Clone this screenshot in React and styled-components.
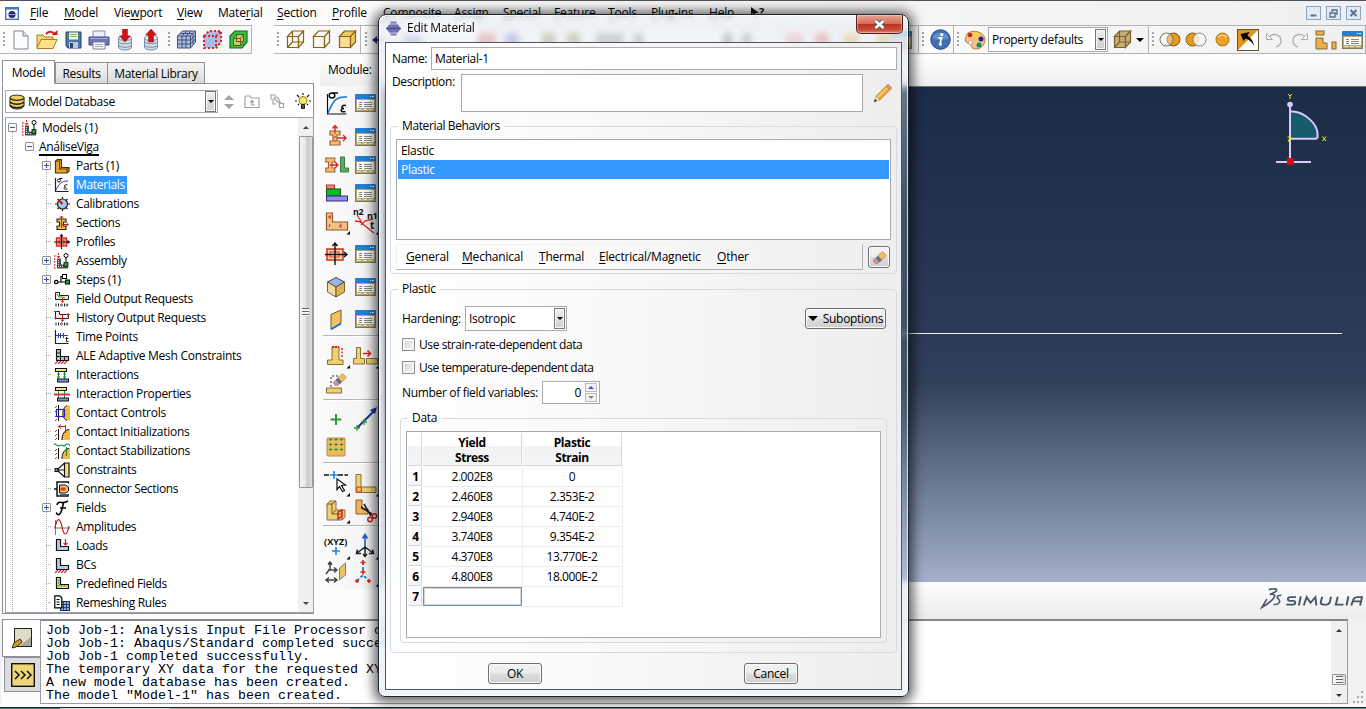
import React from 'react';
import styled, { createGlobalStyle, css } from 'styled-components';

const Global = createGlobalStyle`
  * { box-sizing: border-box; }
  html, body { margin: 0; padding: 0; overflow: hidden; }
  body { font: 12px/16px "Open Sans", "Noto Sans", sans-serif; letter-spacing: -0.3px; color: #000; }
  svg { display: block; flex: none; }
  fieldset, legend { margin: 0; padding: 0; min-width: 0; }
  u { text-underline-offset: 2px; text-decoration-thickness: 1px; }
`;

/* ---------- shell ---------- */
const Desktop = styled.div`
  position: relative; width: 1366px; height: 709px; overflow: hidden;
  display: flex; flex-direction: column; background: #fcfcfc;
  border-top: 1px solid #50505c;
`;
const MenuBar = styled.div`
  height: 24px; flex: none; display: flex; align-items: center; padding-left: 5px;
  background: linear-gradient(90deg, #fff 0%, #fafafa 40%, #f0f0f0 100%);
`;
const MenuLogo = styled.div`width: 25px;`;
const MenuItem = styled.span`width: ${p => p.$w}px; flex: none; white-space: nowrap; letter-spacing: -0.2px;`;
const WindowButtons = styled.div`margin-left: auto; display: flex; gap: 5px; padding-right: 5px;`;
const WindowButton = styled.div`
  width: 15px; height: 14px; border: 1px solid #8fa3bd; background: #dfebf7; display: grid; place-items: center;
`;
const ToolBars = styled.div`
  height: 29px; flex: none; display: flex;
`;
const ToolSection = styled.div`
  width: ${p => p.$w}px; flex: none; display: flex; align-items: center; overflow: hidden;
  margin-left: ${p => p.$ml || 0}px; border: 1px solid #b4b4b4; border-left: 0;
  background: linear-gradient(90deg, ${p => p.$from || '#fdfdfd'}, ${p => p.$to || '#f7f7f7'});
`;
const Grip = styled.div`
  width: 8px; height: 15px; flex: none; margin-left: ${p => p.$ml || 0}px;
  background: linear-gradient(#a6a6a6, #a6a6a6) 3px 0 / 2px 2px, repeating-linear-gradient(#a6a6a6 0 2px, transparent 2px 4px) 3px 0 / 2px 15px no-repeat;
  background-repeat: no-repeat;
`;
const Tool = styled.div`
  width: ${p => p.$w || 26}px; height: 26px; flex: none; display: grid; place-items: center;
`;
const Smudge = styled.div`
  width: ${p => p.$w}px; height: 14px; flex: none; margin-left: ${p => p.$ml}px; background: ${p => p.$c};
`;
const Main = styled.div`height: 565px; flex: none; display: flex;`;

/* ---------- combo boxes ---------- */
const Combo = styled.div`
  width: ${p => p.$w}px; height: ${p => p.$h || 25}px; flex: none; display: flex; align-items: center;
  padding: 1px 1px 1px 3px; background: #fff; border: 1px solid #a9a9ae; gap: 3px; white-space: nowrap;
`;
const ComboText = styled.span`flex: 1; letter-spacing: ${p => p.$ls || -0.3}px;`;
const ComboButton = styled.div`
  width: 11px; height: 21px; border: 1px solid #777; background: linear-gradient(#f2f2f2, #dcdcdc 50%, #cfcfcf);
  display: grid; place-items: center; box-shadow: inset 0 0 0 1px #f8f8f8;
`;
const Down = styled.i`
  width: 0; height: 0; border: ${p => p.$s || 4}px solid transparent; border-top-color: ${p => p.$c || '#000'}; border-bottom: 0;
`;
const Up = styled.i`
  width: 0; height: 0; border: ${p => p.$s || 4}px solid transparent; border-bottom-color: ${p => p.$c || '#000'}; border-top: 0;
`;

/* ---------- left tree panel ---------- */
const Side = styled.div`width: 320px; flex: none; padding: 6px 0 0 2px;`;
const Tabs = styled.div`display: flex; align-items: flex-end; height: 24px; position: relative; z-index: 1; margin-bottom: -1px;`;
const Tab = styled.div`
  width: ${p => p.$w}px; height: ${p => (p.$on ? 24 : 22)}px; display: grid; place-items: center;
  border: 1px solid #8e8f9a; border-bottom-color: ${p => (p.$on ? '#fff' : '#8e8f9a')};
  background: ${p => (p.$on ? '#fff' : 'linear-gradient(#f4f4f4, #e9e9e9 50%, #d8d8d8)')};
  margin-right: ${p => (p.$on ? 0 : -1)}px; white-space: nowrap; padding-top: 1px;
`;
const SidePanel = styled.div`
  width: 312px; height: 531px; border: 1px solid #8e8f9a; background: #fff;
  padding: 6px 0 0 2px; display: flex; flex-direction: column; gap: 4px;
`;
const DbRow = styled.div`display: flex; align-items: center; height: 23px;`;
const DbTools = styled.div`display: flex; align-items: center; padding-left: 6px; gap: 10px;`;
const Sorter = styled.div`display: flex; flex-direction: column; gap: 4px;`;
const TreeBox = styled.div`
  width: 309px; height: 496px; border: 1px solid #a0a0a8; display: flex; overflow: hidden;
`;
const TreeRows = styled.div`
  flex: 1; height: 494px; overflow: hidden;
  background: repeating-linear-gradient(#aaa 0 1px, transparent 1px 2px) 6px 14px / 1px 500px no-repeat;
`;
const TreeRow = styled.div`
  height: 19px; display: flex; align-items: center; white-space: nowrap; padding-left: ${p => p.$pad}px;
`;
const TreeKids = styled.div`
  background: repeating-linear-gradient(#aaa 0 1px, transparent 1px 2px) 40px 0 / 1px 500px no-repeat;
`;
const Stub = styled.div`
  width: 12px; height: 9px; flex: none;
  background: repeating-linear-gradient(90deg, #aaa 0 1px, transparent 1px 2px) 4px 4px / 6px 1px no-repeat;
`;
const StubGap = styled.div`width: 3px; flex: none;`;
const Expander = styled.div`
  width: 9px; height: 9px; border: 1px solid #919191; background: #fafafa; display: grid; place-items: center; border-radius: 1px;
`;
const TreeIcon = styled.div`width: 16px; height: 16px; flex: none;`;
const TreeText = styled.span`
  margin-left: ${p => (p.$ml == null ? 4 : p.$ml)}px; padding: 0 2px; line-height: 18px; letter-spacing: ${p => p.$ls || -0.33}px;
  ${p => p.$sel && css`background: #3399ff; color: #fff;`}
  ${p => p.$under && css`line-height: 14px; border-bottom: 2px solid #000; padding: 0; margin-top: 2px;`}
`;
const ScrollBar = styled.div`
  width: ${p => p.$w || 15}px; flex: none; background: #f0f0f0; display: flex; flex-direction: column; align-items: center;
`;
const ScrollEnd = styled.div`height: ${p => p.$h}px; display: grid; place-items: center; flex: none;`;
const Thumb = styled.div`
  width: 14px; height: ${p => p.$h}px; flex: none; margin-bottom: auto; border: 1px solid #979797; border-radius: 1px;
  margin-top: ${p => p.$mt || 0}px;
  background: linear-gradient(90deg, #f5f5f5, #e6e6e8 45%, #c9cacc 60%, #dcdcde); display: grid; place-items: center;
`;
const ThumbLines = styled.div`width: 7px; height: 8px; background: repeating-linear-gradient(#666 0 1px, #f4f4f4 1px 3px);`;

/* ---------- viewport side ---------- */
const Work = styled.div`flex: 1; padding-top: 3px; display: flex; flex-direction: column;`;
const ModuleBar = styled.div`
  height: 29px; flex: none; padding: 5px 0 0 8px; background: linear-gradient(#ffffff, #eeeeee);
`;
const WorkRow = styled.div`display: flex; height: 533px; flex: none;`;
const ToolBox = styled.div`
  width: 66px; height: 503px; flex: none; background: linear-gradient(90deg, #fbfbfb, #f1f1f1); padding: 3px 0 0 3px;
`;
const ToolBoxRow = styled.div`height: 28px; margin-top: ${p => p.$mt || 0}px; display: flex;`;
const ToolBoxCell = styled.div`width: 28.5px; height: 28px; display: grid; place-items: center;`;
const ToolBoxRule = styled.div`height: 2px; background: #b5b5b5; border-bottom: 1px solid #fff; margin: ${p => p.$m};`;
const View = styled.div`flex: 1; display: flex; flex-direction: column;`;
const Canvas = styled.div`
  height: 496px; flex: none; position: relative; border-top: 1px solid #77776f;
  background: linear-gradient(#1b2c46 0%, #24344f 28%, #2d3d59 54%, #30415a 60%, #a2b0c9 100%);
`;
const Beam = styled.div`position: absolute; left: 0; right: 24px; top: 246px; height: 1px; background: #f2f4f8;`;
const Triad = styled.svg`position: absolute; left: 886px; top: 0;`;
const BrandBar = styled.div`
  height: 37px; flex: none; background: linear-gradient(#fdfdfd, #ececec); display: flex; justify-content: flex-end; padding: 5px 3px 0 0;
`;

/* ---------- message area ---------- */
const Messages = styled.div`height: 85px; flex: none; display: flex; background: #f2f2f2; padding-left: 2px;`;
const MsgTabs = styled.div`width: 38px; background: #fcfcfc;`;
const MsgTab = styled.div`
  height: ${p => p.$h}px; border: 1px solid #8e8f9a; border-right: 0; display: grid; place-items: center;
  background: ${p => (p.$on ? '#fff' : '#dcdcdc')}; margin-left: ${p => (p.$on ? 0 : 2)}px;
`;
const MsgBox = styled.div`
  width: 1308px; height: 85px; border: 1px solid #9a9aa2; border-top: 2px solid #85858d; background: #fff; display: flex;
`;
const MsgText = styled.pre`
  margin: 0; flex: 1; padding: 3px 0 0 5px; font: 13.33px/13px "Liberation Mono", monospace; letter-spacing: 0; color: #000;
`;
const Corner = styled.div`flex: 1; display: flex; justify-content: flex-end; align-items: flex-end;`;
const TaskStrip = styled.div`
  margin-top: auto; height: 2px; flex: none;
  background: linear-gradient(90deg, #56706e 0 60px, #d8d8d8 60px 170px, #b8a890 170px 350px, #6b8890 350px 1366px);
  border-top: 1px solid #15282e;
`;

/* ---------- dialog ---------- */
const Dialog = styled.div`
  position: absolute; left: 378px; top: 13px; width: 531px; height: 683px; border-radius: 8px 8px 7px 7px;
  border: 1px solid #20242c; padding: 0 6px 6px;
  background: linear-gradient(180deg, rgba(238,242,247,.66) 0, rgba(230,237,244,.66) 60px, rgba(190,206,224,.45) 80px, rgba(170,188,210,.22) 200px, rgba(160,180,205,.14) 400px, rgba(200,214,230,.3) 560px, rgba(232,240,248,.85) 600px, rgba(238,244,250,.92) 100%);
  backdrop-filter: blur(3px);
  box-shadow: inset 0 0 0 1px rgba(255,255,255,.75), 0 1px 12px 4px rgba(0,0,0,.62);
  display: flex; flex-direction: column;
`;
const TitleBar = styled.div`height: 27px; flex: none; display: flex; align-items: flex-start; padding: 5px 0 0 1px; gap: 6px;`;
const TitleText = styled.span`letter-spacing: -0.22px; text-shadow: 0 0 6px #fff, 0 0 8px #fff, 0 0 10px #fff;`;
const Close = styled.div`
  margin: -5px -1px 0 auto; width: 47px; height: 19px; border: 1px solid #5a1a16; border-top: 0; border-radius: 0 0 5px 5px;
  background: linear-gradient(#e6a596 0, #d4705c 47%, #b8321c 50%, #c9513a 85%, #e08a70 100%); display: grid; place-items: center;
  box-shadow: inset 0 0 0 1px rgba(255,255,255,.35);
`;
const Body = styled.div`
  width: 517px; height: 648px; border: 1px solid #50565e; padding: 4px 3px 0 4px;
  background: linear-gradient(90deg, #ffffff, #fafafa 35%, #eeeeee); display: flex; flex-direction: column;
`;
const Row = styled.div`
  display: flex; align-items: ${p => p.$a || 'center'}; height: ${p => p.$h}px; flex: none;
  margin-top: ${p => p.$mt || 0}px; padding-left: ${p => p.$pl || 0}px;
`;
const Label = styled.label`width: ${p => (p.$w ? `${p.$w}px` : 'auto')}; flex: none; white-space: nowrap; letter-spacing: ${p => p.$ls || -0.3}px;`;
const Field = styled.div`
  width: ${p => p.$w}px; height: ${p => p.$h}px; border: 1px solid #a9a9ae; background: #fff; padding: 3px; letter-spacing: -0.3px;
`;
const Pencil = styled.div`margin-left: 10px; align-self: center;`;
const Group = styled.fieldset`
  width: ${p => p.$w}px; height: ${p => p.$h}px; flex: none; margin-top: ${p => p.$mt}px; margin-left: ${p => p.$ml || 0}px;
  border: 1px solid #d3dbe3; border-radius: 4px; padding: ${p => p.$pad};
`;
const Legend = styled.legend`
  margin-left: calc(${p => p.$x}px - var(--inset, 0px)); padding: 0 4px; height: 16px; letter-spacing: ${p => p.$ls || -0.3}px;
`;
const List = styled.div`width: 495px; height: 101px; border: 1px solid #a9a9ae; background: #fff; padding: 1px;`;
const ListItem = styled.div`
  height: 19px; line-height: 19px; padding-left: 3px; ${p => p.$sel && css`background: #3399ff; color: #fff;`}
`;
const BehaviorMenu = styled.div`
  width: 467px; height: 26px; display: flex; align-items: center; padding-left: 9px;
  border: 1px solid #f1f1f5; border-right-color: #b0b0b0; border-bottom-color: #b0b0b0;
`;
const Button = styled.div`
  width: ${p => p.$w}px; height: ${p => p.$h || 21}px; flex: none; border: 1px solid #707070; border-radius: 3px;
  background: linear-gradient(#f3f3f3, #ebebeb 49%, #dddddd 51%, #cfcfcf); box-shadow: inset 0 0 0 1px #fbfbfb;
  display: flex; align-items: center; justify-content: center; gap: 5px; white-space: nowrap;
  margin-left: ${p => p.$ml || 0}px;
`;
const Check = styled.div`
  width: 13px; height: 13px; border: 1px solid #8e8f8f; flex: none; margin-right: 4px;
  background: linear-gradient(135deg, #cdd2d8, #f6f6f6); box-shadow: inset 0 0 0 2px #f4f4f4;
`;
const Spin = styled.div`
  width: 58px; height: 23px; border: 1px solid #a9a9ae; background: #fff; display: flex; align-items: center; justify-content: flex-end; padding-right: 2px; gap: 4px;
`;
const SpinButtons = styled.div`display: flex; flex-direction: column; gap: 1px;`;
const SpinButton = styled.div`width: 12px; height: 9px; border: 1px solid #bcbcbc; background: #f1f1f1; display: grid; place-items: center;`;
const TableFrame = styled.div`width: 475px; height: 207px; border: 1px solid #a9a9ae; background: #fff; padding: 1px;`;
const Table = styled.div`display: grid; grid-template-columns: 15px 100px 100px; grid-template-rows: 34px repeat(7, 20px); width: 215px;`;
const Head = styled.div`
  font-weight: 700; text-align: center; line-height: 15px; padding-top: 2px; white-space: pre; letter-spacing: -0.42px;
  background: linear-gradient(#fff 40%, #f1f2f4 42%, #f4f5f7); border-right: 1px solid #d6d8db; border-bottom: 1px solid #d6d8db; margin: 0 1px 1px 0;
`;
const RowHead = styled.div`
  font-weight: 700; text-align: center; line-height: 19px; background: linear-gradient(#fff 40%, #f3f4f6); border-right: 1px solid #d6d8db; border-bottom: 1px solid #d6d8db; margin: 0 1px 1px 0; padding-left: 2px;
`;
const Cell = styled.div`
  text-align: center; line-height: 19px; border-right: 1px solid #ececec; border-bottom: 1px solid #ececec; padding-right: 1px; letter-spacing: -0.45px;
  ${p => p.$active && css`border: 1px solid #8a8a8e; border-right-color: #5c94d6; border-bottom-color: #5c94d6; margin: 0 1px 1px 0; box-shadow: inset 0 0 0 1px #d6d6d6;`}
`;

/* ---------- icon drawings ---------- */
const S = ({ s = 16, w, h, vb, children }) => (
  <svg width={w || s} height={h || s} viewBox={vb || `0 0 ${w || s} ${h || s}`} fill="none">{children}</svg>
);
const Hatch = ({ y = 13, x = 1, n = 4 }) => (
  <path d={Array.from({ length: n }, (_, i) => `M${x + i * 3} ${y + 3}l3 -3`).join('')} stroke="#c22" strokeWidth="1.1" />
);
const Manager = () => (
  <S w={21} h={18}>
    <rect x=".5" y="1.500" width="20" height="16" fill="#b5a97c" stroke="#837a54" />
    <path d="M0 1a1 1 0 0 1 1-1h19a1 1 0 0 1 1 1v4h-21z" fill="#1f80d4" /><path d="M15 2.500h1M17 2.500h2" stroke="#fff" />
    <rect x="2" y="6" width="17" height="8" fill="#fcfcf8" />
    <path d="M4 8.500h3M4 10.500h3M4 12.500h3M9 8.500h8M9 10.500h8M9 12.500h8" stroke="#77776f" strokeWidth=".9" />
    <path d="M2 15.500h4M8 15.500h4M14 15.500h4" stroke="#eee6c2" />
  </S>
);
const IBeam = 'M2 2h10v4h-3v6h3v4h-10v-4h3v-6h-3z';
const WireCube = ({ fill = 'none', s = '#8a6210', inner, left = fill }) => (
  <S w={21} h={21}>
    <path d="M2.500 7.500h11v11h-11z" fill={left} stroke={s} strokeWidth="1.200" />
    <path d="M2.500 7.500l5-5.500h11l-5 5.500zM18.500 2v11l-5 5.500v-11z" fill={fill} stroke={s} strokeWidth="1.200" />
    {inner && <path d="M7.500 2v11h11M7.500 13l-5 5.500" stroke={s} strokeWidth="1.200" />}
  </S>
);
const GridCube = ({ red }) => (
  <S w={21} h={21}>
    <path d="M1.500 7l5-5h13v11l-5 6h-13z" fill="#a9bbea" />
    <path d={red ? 'M2 7l5-5h12v11l-5 6h-12zM2 7h12v12M14 7l5-5' : 'M1.500 7l5-5h13v11l-5 6h-13zM1.500 7h13v12M14.500 7l5-5M6 7v12M10 7v12M1.500 11h13l5-5M1.500 15h13l5-5M6 7l5-5M10 7l5-5M4 4.500h13v11'}
      stroke={red ? '#ea2020' : '#44506c'} strokeWidth={red ? 2 : 1} strokeDasharray={red ? '2 2' : undefined} />
  </S>
);
const DbArrow = ({ up }) => (
  <S w={16} h={22}>
    <path d="M1.500 9v9c0 4 13 4 13 0v-9z" fill="#cfdce9" stroke="#7d8fa3" />
    <ellipse cx="8" cy="9" rx="6.500" ry="2.500" fill="#eef4fa" stroke="#7d8fa3" />
    <path d="M1.500 12.500c0 3 13 3 13 0M1.500 16c0 3 13 3 13 0" stroke="#7d8fa3" />
    <path d={up ? 'M5.500 13v-7h-3l5.500-6 5.500 6h-3v7z' : 'M5.500 0h5v7h3l-5.500 6-5.500-6h3z'} fill="#cc1418" stroke="#9a0c10" strokeWidth=".5" />
  </S>
);
const EraserShape = () => (
  <>
    <path d="M1 11l3 3 3-1.500-4-4z" fill="#e58a92" stroke="#b0606a" strokeWidth=".6" />
    <path d="M3.500 8l4 4.500 2.500-2.500-4-4.500z" fill="#59708c" />
    <path d="M6 5.500l4 4.500 4.500-4.500-4-4z" fill="#eebd62" stroke="#b3832c" strokeWidth=".6" />
  </>
);

const T = {
  blank: <S w={16} h={20}><path d="M1 1h9l5 5v13h-14z" fill="#fbfcff" stroke="#7d8796" /><path d="M10 1v5h5" fill="#dde3ec" stroke="#7d8796" /></S>,
  open: <S w={22} h={20}><path d="M1 18V5h6l2 2h8v3" fill="#f6d778" stroke="#a97c1a" /><path d="M1 18.500l4-9h16l-4 9z" fill="#fbe08a" stroke="#a97c1a" /><path d="M10 4c3-3 7-3 9 1" stroke="#d22418" strokeWidth="2" /><path d="M15.500 5h6v-5z" fill="#d22418" /></S>,
  save: <S w={17} h={18}><path d="M1 1h15v16h-13l-2-2z" fill="#4b76ac" stroke="#26466f" /><rect x="4" y="1.500" width="9" height="7" fill="#eaf2fa" /><path d="M5 3.500h7M5 5.500h7" stroke="#8cb34e" /><rect x="4" y="11" width="9" height="6" fill="#b9c9dd" /><rect x="5" y="12" width="3" height="5" fill="#26466f" /></S>,
  print: <S w={22} h={20}><path d="M5 7v-6h12v6" fill="#eaf1fb" stroke="#8a94a8" /><path d="M1 7h20v8h-20z" fill="#6f74b6" stroke="#474c86" /><path d="M2 8.500h18" stroke="#a9ade0" /><path d="M5 12h12v7h-12z" fill="#fff" stroke="#7780a0" /><path d="M7 14.500h8M7 16.500h8" stroke="#9ab" /></S>,
  dbDown: <DbArrow />, dbUp: <DbArrow up />,
  grid1: <GridCube />, grid2: <GridCube red />,
  grid3: <S w={21} h={21}><path d="M2 7l5-5h12v11l-5 6h-12z" fill="#31c63a" stroke="#146a1a" strokeWidth="1.200" /><path d="M5.500 9.500l3-4h7v7l-3 4h-7z" fill="#d2c66a" stroke="#5a5218" /><path d="M5.500 9.500h7v7M12.500 9.500l3-4M8.500 5.500v7h7" stroke="#5a5218" strokeWidth=".9" /></S>,
  cube1: <WireCube inner />, cube2: <WireCube />, cube3: <WireCube fill="#efc765" left="#f7dd96" />, cube4: <WireCube fill="#c5ae7c" inner s="#7c6128" />,
  info: <S w={21} h={21}><circle cx="10.500" cy="10.500" r="9.800" fill="#3f6fb4" stroke="#2b5190" /><path d="M2 9a9 8 0 0 1 17 0q-8 4-17 0" fill="#7fa3d6" opacity=".6" /><circle cx="11.800" cy="5.500" r="1.500" fill="#fff" /><path d="M8.500 9h3l-1.600 6.500h2" stroke="#fff" strokeWidth="1.800" /></S>,
  palette: <S w={22} h={20}><path d="M3 4C7-1 20 1 21 9c0 6-4 10-9 10-4 0-5-2-5-4s-3-1-5-3 0-5 1-8z" fill="#f5c083" stroke="#9a6a30" strokeWidth=".8" /><circle cx="6" cy="5" r="2.300" fill="#d8201c" /><circle cx="12" cy="4.500" r="2.300" fill="#f5e21b" /><circle cx="17" cy="9" r="2.500" fill="#1c2a90" /><circle cx="15" cy="15" r="2.500" fill="#15905a" /><circle cx="6.500" cy="12.500" r="2" fill="#fff" stroke="#a77" strokeWidth=".6" /></S>,
  venn1: <S w={22} h={15}><circle cx="14.500" cy="7.500" r="6.500" fill="#e99a1b" stroke="#7a5a18" /><circle cx="7.500" cy="7.500" r="6.500" fill="#fff" fillOpacity=".35" stroke="#7a7058" /></S>,
  venn2: <S w={22} h={15}><circle cx="7.500" cy="7.500" r="6.500" fill="#e99a1b" stroke="#7a5a18" /><circle cx="14.500" cy="7.500" r="6.500" fill="#fbfbfb" fillOpacity=".8" stroke="#8a8a8a" /></S>,
  ball: <S w={15} h={15}><circle cx="7.500" cy="7.500" r="6.500" fill="#eda125" stroke="#a8741c" /><path d="M3 5a6 5 0 0 1 9 0" stroke="#fbd28a" strokeWidth="1.500" /></S>,
  replace: <S w={22} h={22}><rect x=".5" y=".5" width="21" height="21" fill="#fff" stroke="#5c5438" /><path d="M1 21v-20h20z" fill="#e0951c" /><path d="M3.500 5l9-2-2 3.500c4 3 6 6 6.500 10.500-2-4-4.500-6-8.500-7.500l-2 2.500z" fill="#000" /></S>,
  undo: <S w={18} h={18}><path d="M4 6c5-5 12-2 12 4 0 3-2 5-5 6" stroke="#a9a9a9" strokeWidth="1.200" /><path d="M1.500 2.500v6h6z" fill="#fff" stroke="#a9a9a9" /></S>,
  redo: <S w={18} h={18}><path d="M14 6c-5-5-12-2-12 4 0 3 2 5 5 6" stroke="#a9a9a9" strokeWidth="1.200" /><path d="M16.500 2.500v6h-6z" fill="#fff" stroke="#a9a9a9" /></S>,
  parts: <S w={22} h={20}><rect x="1" y="1" width="8" height="4" fill="#efb04a" stroke="#7c6a3a" /><path d="M1 8h7v5h4v6h-11z" fill="#efb04a" stroke="#7c6a3a" /><rect x="17" y="12" width="4" height="7" fill="#efb04a" stroke="#7c6a3a" /></S>,
  manager: <Manager />,
  arrow: <S w={14} h={14}><path d="M2 7h11" stroke="#22307a" strokeWidth="2" /><path d="M1 7l5-4v8z" fill="#22307a" /></S>,
};

const Assembly = () => (
  <>
    <path d="M3 5.500h4v6h7v4h-11z" fill="#4e4e4e" />
    <path d="M4 7.500h2M4 9.500h2M4 11.500h2M4 13.500h9" stroke="#ddd" strokeDasharray="1 1" /><path d="M.8 2v14M4.500 0v4" stroke="#d22" strokeDasharray="2 1" /><path d="M3 3l1.500 2L6 3" stroke="#d22" />
    <circle cx="12" cy="2.500" r="2" fill="#fff" stroke="#000" /><path d="M12 4.500v5" stroke="#000" /><rect x="10" y="9.500" width="4" height="4" fill="#2e9b36" stroke="#111" strokeWidth=".8" />
  </>
);
const LShape = ({ fill = '#b9cbea', y = 1 }) => <path d={`M2.500 ${y + 0.5}h4v7h8v4h-12z`} fill={fill} stroke="#111" strokeWidth="1.200" />;
const K = {
  part: <S><path d="M1.500 3l2-1.500h4v8h7.500v3.500l-2 2h-11.500z" fill="#e9a62c" stroke="#4e3508" strokeWidth="1.200" /><path d="M1.500 3h4v8h7.500v4M5.500 3l2-1.500M5.500 11l2-1.500M13 11l2-1.500" stroke="#4e3508" strokeWidth=".9" /></S>,
  mat: <S><path d="M1.500 1v13.500h13" stroke="#222" strokeWidth="1.200" /><path d="M2 13c3-6 5-9 12-9" stroke="#2a3fb8" /><circle cx="5" cy="3.500" r="1.600" stroke="#222" /><path d="M5 1.500h3.500M13.500 8c-4-1-4 2-1.500 2-3 0-3 3 1.500 2" stroke="#222" /></S>,
  calib: <S><path d="M8.500 1v14M1 8h15M3.500 3l10 10M13.500 3l-10 10" stroke="#222" strokeWidth="1.200" /><circle cx="8.500" cy="8" r="5" fill="#aac6ea" stroke="#222" strokeWidth="1.200" /><path d="M8.500 8l-4-4" stroke="#c11" strokeWidth="2" /></S>,
  section: <S><path d="M3 4h9v3h-2.500v4h2.500v3.500h-9v-3.500h2.500v-4h-2.500z" fill="#f4c04e" stroke="#222" strokeWidth="1.100" /><path d="M7.500 13v-12M5.500 3l2-2 2 2M8 9.500h6M12.500 7.500l2 2-2 2" stroke="#c22" /></S>,
  profile: <S><rect x="2.500" y="4" width="10" height="8" fill="#f7c6a2" stroke="#d22" strokeWidth="1.400" /><rect x="5" y="6" width="5" height="4" stroke="#d22" /><path d="M7.500 1v14M0 8h15M6 2.500l1.500-2 1.500 2M13.500 6.500l2 1.500-2 1.500" stroke="#111" strokeWidth="1.100" /></S>,
  asm: <S><Assembly /></S>,
  step: <S><circle cx="2.200" cy="10" r="1.700" stroke="#000" strokeWidth="1.200" fill="#fff" /><path d="M4 10h3v-5.500h2M7 10h4" stroke="#000" strokeWidth="1.200" /><rect x="8.500" y="2.500" width="4" height="4" fill="#fff" stroke="#000" /><rect x="11.500" y="8" width="4" height="4" fill="#2e9b36" stroke="#000" /></S>,
  field: <S><path d="M1.500 1.500h4v3h9v4h-13z" fill="#e7efd0" stroke="#222" /><path d="M3 3l2 3 3 0 3 1" stroke="#3a9a4a" /><path d="M8.500 7v4M7 9.500l1.500 2 1.500-2" stroke="#c22" /><path d="M2 12.500v3M4.500 12.500v3M10.500 12.500v3" stroke="#222" /><circle cx="7.500" cy="14" r="1" stroke="#222" strokeWidth=".8" /><circle cx="13" cy="14" r="1" stroke="#222" strokeWidth=".8" /></S>,
  hist: <S><path d="M1.500 1.500h4v3h9v4h-13z" fill="#f8f0f2" stroke="#222" /><path d="M0 1.500h3M12 4.500h4M14 3v4M0 8h3M1.500 6.500v3M8.500 5v6M7 9.500l1.500 2 1.500-2" stroke="#c22" /><path d="M2 12.500v3M4.500 12.500v3M10.500 12.500v3" stroke="#222" /><circle cx="7.500" cy="14" r="1" stroke="#222" strokeWidth=".8" /><circle cx="13" cy="14" r="1" stroke="#222" strokeWidth=".8" /></S>,
  time: <S><path d="M1.500 1v13.500h13" stroke="#222" strokeWidth="1.200" /><path d="M2 6.500h12M4.500 4v5M6.500 4v5M9.500 4v5" stroke="#2a3fb8" /><path d="M12.500 8v4.500h2M11.500 9.500h3" stroke="#222" /></S>,
  ale: <S><path d="M2.500 1.500h4v7h8v4h-12z" fill="#a9bde0" stroke="#111" strokeWidth="1.100" /><path d="M2.500 5h4M2.500 8.500h4M6.500 8.500v4M10.500 8.500v4" stroke="#111" strokeWidth=".9" /><Hatch /></S>,
  inter: <S><rect x="1.500" y="1.500" width="11" height="3" fill="#f4e27e" stroke="#111" /><path d="M4.500 5v7M10.500 5v7M3 7h3M3 10h3M9 7h3M9 10h3" stroke="#138a3f" /><rect x="3.500" y="12" width="11" height="3" fill="#7f94d8" stroke="#111" /></S>,
  interp: <S><rect x="1.500" y="1.500" width="11" height="3" fill="#f4e27e" stroke="#111" /><path d="M4.500 5v7M10.500 5v7" stroke="#138a3f" /><path d="M0 8.500h16" stroke="#d33" strokeWidth="2" /><rect x="3.500" y="12" width="11" height="3" fill="#7f94d8" stroke="#111" /></S>,
  cc: <S><path d="M1 3l2-2M1 7l2-2M1 12l2-2M1 16l2-2" stroke="#c22" /><path d="M4.500 0v16" stroke="#111" /><path d="M16 .5h-2c-7 0-8 15 0 15h2z" fill="#f0bd42" /><path d="M13 .5c-5 2-6 13 0 15" stroke="#111" strokeWidth=".8" /><rect x="2.500" y="4.500" width="8" height="7" stroke="#22c" strokeWidth="1.200" /></S>,
  ci: <S><path d="M1 8l2-2M1 12l2-2M1 16l2-2" stroke="#c22" /><path d="M4.500 5v11" stroke="#111" /><path d="M16 5c-6 0-8 5-8 11h8z" fill="#f0bd42" /><path d="M15 5.500c-5 1-7 5-7 10.500" stroke="#111" /><path d="M11.500 1v8M11.500 2.500h-7M7 .5l-2.500 2 2.500 2" stroke="#c22" /></S>,
  cs: <S><path d="M1 8l2-2M1 12l2-2M1 16l2-2" stroke="#c22" /><path d="M4.500 5v11" stroke="#111" /><path d="M16 5c-6 0-8 5-8 11h8z" fill="#f0bd42" /><path d="M15 5.500c-5 1-7 5-7 10.500" stroke="#111" /><path d="M0 1.500c2-2 3 3 6 1s3 2 5 0 3-2 5 0M12.500 4v9" stroke="#138a3f" strokeWidth="1.200" /></S>,
  con: <S><path d="M10.500 1h4.500v14h-4.500z" fill="#f4e27e" stroke="#111" strokeWidth="1.200" /><path d="M10.500 1l-7.500 7 7.500 7M3 8h7.500" stroke="#111" strokeWidth="1.100" /><rect x="1" y="6.500" width="3" height="3" fill="#88a" stroke="#111" /></S>,
  conn: <S><path d="M14.500 2.500v-1.500h-11.500v14h11v-2M3 8h-3" stroke="#111" strokeWidth="1.500" /><path d="M5.500 4h6l3 2v4l-3 2h-6z" fill="#eec95c" stroke="#111" /><rect x="6.500" y="6.500" width="5" height="3" fill="#d33" /><path d="M6 13.500h8" stroke="#36a" /></S>,
  amp: <S><path d="M1.500 1v15M0 9h16" stroke="#777" /><path d="M1 9c2-11 5-11 7-1s5 9 7-1" stroke="#b11a1a" strokeWidth="1.200" /></S>,
  load: <S><LShape /><path d="M11.500 1v6M9.500 5l2 2 2-2" stroke="#c22" strokeWidth="1.200" /></S>,
  bc: <S><LShape /><Hatch x={1} /></S>,
  pre: <S><LShape fill="#f0e27e" /><path d="M4.500 3v7h8.500" stroke="#49b34e" strokeDasharray="2 1" strokeWidth="1.300" /><path d="M5.500 5v4.500h8" stroke="#d66a22" strokeDasharray="1 2" /></S>,
  remesh: <S><rect x="6.500" y="6.500" width="9" height="9" fill="#8fb0e0" stroke="#1c2c58" /><path d="M9.500 6.500v9M12.500 6.500v9M6.500 9.500h9M6.500 12.500h9" stroke="#1c2c58" strokeWidth=".8" /><path d="M.8 .8h5l2 2v10h-7z" fill="#fff" stroke="#000" strokeWidth="1.200" /><path d="M2.500 4.500h3M2.500 7h3M2.500 9.500h3" stroke="#000" /></S>,
  fields: <S><path d="M3 5c0-3 3-3 5-2.500s4-.5 6-1.500M9.500 2.500c-1 5-2 11-4.500 12-2 .4-3-1-2-2M6 8h6" stroke="#000" strokeWidth="1.600" /></S>,
};

const CornerMark = () => <path d="M27 24v3.500h-3.500z" fill="#000" />;
const B = ({ corner, children }) => (
  <svg width="28" height="28" viewBox="0 0 28 28" fill="none">{children}{corner && <CornerMark />}</svg>
);
const Y = { fill: '#f0cf74', stroke: '#86703a' };
const Bx = {
  mat: <B><path d="M4.500 5v20h19" stroke="#111" strokeWidth="1.200" /><path d="M5 24c5-12 8-17 19-16" stroke="#1a72d4" strokeWidth="1.500" /><ellipse cx="9" cy="6.500" rx="2.800" ry="2.500" stroke="#111" strokeWidth="1.500" /><path d="M9 4h6M23 16.500c-5-1-5 3-2 3-4 0-4 4.500 1.500 3" stroke="#111" strokeWidth="1.600" /></B>,
  sec: <B><path transform="translate(5 6)" d={IBeam} fill="#f3c07a" stroke="#a0602a" strokeWidth="1.200" /><path d="M12 9v-6M9.500 5.500l2.500-3 2.500 3M14 15h8M20 12l3 3-3 3" stroke="#d22" strokeWidth="1.400" /><path d="M12 9v12" stroke="#d22" strokeDasharray="2 2" /></B>,
  assign: <B><path transform="translate(1 5) scale(.9 1)" d={IBeam} fill="#f3c07a" stroke="#a0602a" strokeWidth="1.200" /><path d="M7 14h7M12 11l3 3-3 3" stroke="#d22" strokeWidth="1.300" /><path d="M17.500 6h4v11h4v4h-8z" fill="#5faa62" stroke="#3a7a3e" /></B>,
  layup: <B><rect x="3.500" y="6" width="8" height="4" fill="#f08a80" stroke="#a33" /><rect x="3.500" y="10" width="14" height="7" fill="#11b822" stroke="#165a1a" /><rect x="3.500" y="17" width="21" height="5" fill="#8f8df0" stroke="#33337a" /></B>,
  orient: <B corner><path d="M3.500 6h6v9h15v8h-21z" fill="#f3c386" stroke="#8a5a2a" strokeWidth="1.200" /><path d="M7 8v4M5 10h3M16 18l2 3M18 16.500v4M7 17l-1 3" stroke="#d22" /></B>,
  n: <B corner><path d="M7 14l15 12M5 8l4 6M9 18l4-4 8-2M10 15l-7-1" stroke="#d22" strokeWidth="1.300" /><text x="1" y="8" fontSize="9" fontWeight="700" fill="#111">n2</text><text x="15" y="12" fontSize="9" fontWeight="700" fill="#111">n1</text><text x="18" y="22" fontSize="10" fontWeight="700" fill="#111">t</text></B>,
  prof: <B><rect x="4" y="9" width="16" height="11" fill="#fbd3b2" stroke="#d23b1a" strokeWidth="1.600" /><rect x="7" y="12" width="9" height="5" stroke="#d23b1a" /><path d="M12 25v-21M9.500 6l2.500-3 2.500 3M2 14.500h21M21 12l3 2.500-3 2.500" stroke="#111" strokeWidth="1.400" /></B>,
  skin: <B><path d="M4.500 9l8.500-4.500 8.500 4.500-8.500 5z" fill="#9bb6e4" stroke="#445" /><path d="M4.500 9v10l8.500 5v-10z" fill="#f4d9a0" stroke="#5a4518" strokeWidth=".8" /><path d="M21.500 9v10l-8.500 5v-10z" fill="#e0b058" stroke="#5a4518" strokeWidth=".8" /></B>,
  stringer: <B><path d="M8 9.500l10-4.500v13l-10 6z" fill="#f2c262" stroke="#7a5618" /><path d="M8 24.500l10-6" stroke="#1a72d4" strokeWidth="1.600" /></B>,
  ext: <B corner><path d="M9 19v-13h7v13h4v4.500h-15.500v-4.500z" {...Y} /><path d="M9 6h7" stroke="#d22" strokeWidth="1.800" strokeDasharray="2 1" /><path d="M19 7v10" stroke="#d22" strokeDasharray="2 1.500" strokeWidth="1.500" /></B>,
  ext2: <B corner><path d="M4.500 6.500h4v11h4v5.500h-11v-5.500h3zM14.500 17.500h11v5.500h-11z" {...Y} /><path d="M11 12.500h7M15.500 9.500l3 3-3 3" stroke="#d22" strokeWidth="1.500" /></B>,
  erase: <B><path d="M3.500 19h15v5h-15z" {...Y} /><path d="M8 18v-11h7" stroke="#222" strokeDasharray="2 2" /><g transform="translate(9 3)"><EraserShape /></g></B>,
  plus: <B><path d="M13 9v11M7.500 14.500h11" stroke="#2b9a3a" strokeWidth="2" /></B>,
  axis: <B><path d="M5 23l18-18" stroke="#15339a" strokeWidth="2" /><path d="M18 5l7-3-2 7z" fill="#15339a" /><path d="M2 23h6M5 20v6M9 17h6M12 14v6" stroke="#2b9a3a" strokeWidth="1.300" /></B>,
  pts: <B><rect x="4" y="5" width="18" height="18" rx="1" fill="#eeb95c" stroke="#c08a34" /><path d="M5 6.500h16M5 11.500h16M5 16.500h16" stroke="#2b9a3a" strokeWidth="3" strokeDasharray="1 4.500" strokeDashoffset="-2" /><path d="M5 6.500h16M5 11.500h16M5 16.500h16" stroke="#2b9a3a" strokeDasharray="3.500 2" strokeDashoffset="-.8" /></B>,
  pick: <B corner><path d="M1 6h6M15 6h10" stroke="#111" strokeWidth="1.500" strokeDasharray="5 1.500" /><path d="M11 2v8M7 6h8" stroke="#1a84e0" strokeWidth="1.600" /><path d="M14 10l8.500 6-4 .5 3 5-2 1-3-5-2.500 3z" fill="#fff" stroke="#111" strokeWidth="1.200" /></B>,
  part: <B corner><path d="M4 5.500h5v12.500h15v5.500h-20z" {...Y} /><circle cx="7" cy="20.500" r="2.600" stroke="#e2501c" strokeWidth="1.400" /></B>,
  cut: <B corner><path d="M4 8l3-3h6v9h9v7l-3 3h-15z" {...Y} /><path d="M4 8h5v10h10v6M9 8l4-3M9 18l4-4" stroke="#6f5718" /><path d="M15 16l4-2v6l-4 3z" stroke="#d22" strokeWidth="1.500" /></B>,
  scissors: <B><path d="M4 4h6v9h6v5h-12z" fill="#f0b35c" stroke="#8a5a2a" /><path d="M9 11l11 7M12 8l7 12" stroke="#222" strokeWidth="1.600" /><circle cx="22.500" cy="20" r="2.200" stroke="#b22" strokeWidth="1.400" /><circle cx="18" cy="23.500" r="2.200" stroke="#b22" strokeWidth="1.400" /></B>,
  xyz: <B corner><text x="1" y="13" fontSize="9" fontWeight="700" fill="#111" textLength="23">(XYZ)</text><path d="M13 15v8M9 19h8" stroke="#1a84e0" strokeWidth="1.600" /></B>,
  csys: <B corner><path d="M13 3v14M10.500 6.500l2.500-4 2.500 4" stroke="#1a62c4" strokeWidth="1.600" /><path d="M13 15l-8 6M13 15l8 6M13 15v9M5.500 17.500l-1 4 4.500 0M20.500 17.500l1 4-4.500 0M11 22l2 2.500 2-2.500" stroke="#222" strokeWidth="1.500" /></B>,
  plane: <B><path d="M7 3v8M5 11h8M6 11l-3 4M3 21h11M6 18.500l-3 2.500 3 2.500M11 18.500l3 2.500-3 2.500M5 5.500l2-2.500 2 2.500M11 8.500l3 2.500-3 2.500" stroke="#444" strokeWidth="1.500" /><path d="M16.500 9l6-5v12l-6 5z" fill="#f2c262" stroke="#4a8ac8" /></B>,
  csys2: <B corner><path d="M11 3v11M5 22l6-6 6 6" stroke="#1a72d4" strokeWidth="1.700" strokeDasharray="3 2" /><path d="M8.500 3.500h5M11 1v5M8.500 13h5M11 10.500v5M3 22h4M5 20v4M15 22h4M17 20v4" stroke="#e02a1a" strokeWidth="1.600" /></B>,
  man: <Manager />,
};

const Mnemonic = ({ t, at = 0 }) => (<>{t.slice(0, at)}<u>{t[at]}</u>{t.slice(at + 1)}</>);

const menus = [['File', 34], ['Model', 50], ['Viewport', 63, 3], ['View', 41], ['Material', 59, 4], ['Section', 55], ['Profile', 51], ['Composite', 71], ['Assign', 49], ['Special', 51], ['Feature', 54], ['Tools', 43], ['Plug-ins', 58], ['Help', 42]];
const kids = [
  ['part', 'Parts (1)', 1], ['mat', 'Materials', 0, 1], ['calib', 'Calibrations'], ['section', 'Sections'], ['profile', 'Profiles'],
  ['asm', 'Assembly', 1], ['step', 'Steps (1)', 1], ['field', 'Field Output Requests'], ['hist', 'History Output Requests'], ['time', 'Time Points'],
  ['ale', 'ALE Adaptive Mesh Constraints'], ['inter', 'Interactions'], ['interp', 'Interaction Properties'], ['cc', 'Contact Controls'],
  ['ci', 'Contact Initializations'], ['cs', 'Contact Stabilizations'], ['con', 'Constraints'], ['conn', 'Connector Sections'], ['fields', 'Fields', 1],
  ['amp', 'Amplitudes'], ['load', 'Loads'], ['bc', 'BCs'], ['pre', 'Predefined Fields'], ['remesh', 'Remeshing Rules'],
];
const wider = { 'ALE Adaptive Mesh Constraints': -0.28, 'Contact Initializations': -0.28, 'Contact Stabilizations': -0.28, 'Contact Controls': -0.22 };
const boxRows = [
  ['mat', 'man', 0], ['sec', 'man', 6], ['assign', 'man', 0], ['layup', 'man', 0], ['orient', 'n', 0], ['prof', 'man', 5], ['skin', 'man', 5], ['stringer', 'man', 4],
  'rule', ['ext', 'ext2', 0], ['erase', null, 0], 'rule', ['plus', 'axis', 0], ['pts', null, 0], 'rule2', ['pick', 'part', 0], ['cut', 'scissors', -1], 'rule2', ['xyz', 'csys', 0], ['plane', 'csys2', -1],
];
const data = [['2.002E8', '0'], ['2.460E8', '2.353E-2'], ['2.940E8', '4.740E-2'], ['3.740E8', '9.354E-2'], ['4.370E8', '13.770E-2'], ['4.800E8', '18.000E-2'], ['', '']];
const log = `Job Job-1: Analysis Input File Processor completed successfully.
Job Job-1: Abaqus/Standard completed successfully.
Job Job-1 completed successfully.
The temporary XY data for the requested XY plot
A new model database has been created.
The model "Model-1" has been created.`;

const Sign = ({ plus }) => (
  <Expander><S s={7}><path d={plus ? 'M1 3.500h5M3.500 1v5' : 'M1 3.500h5'} stroke="#3a55a8" /></S></Expander>
);
const Tools = ({ names }) => names.map(n => <Tool key={n}>{T[n]}</Tool>);

function TopBars() {
  return (
    <>
      <MenuBar>
        <MenuLogo><S w={14} h={13}><rect x=".7" y=".7" width="12.600" height="11.600" fill="#fff" stroke="#3d78c4" strokeWidth="1.400" /><path d="M0 1.500h14" stroke="#3d78c4" strokeWidth="2" /><circle cx="7" cy="7.500" r="3.600" fill="#2a2a6a" /><path d="M2.500 7.500h9" stroke="#99c" /></S></MenuLogo>
        {menus.map(([t, w, at]) => <MenuItem key={t} $w={w}><Mnemonic t={t} at={at || 0} /></MenuItem>)}
        <S w={16} h={14}><path d="M0 1v8l2-2 2 4h2l-2-4h4z" fill="#111" /><text x="8" y="10" fontSize="11" fontWeight="700" fill="#111">?</text></S>
        <WindowButtons>
          <WindowButton><S w={9} h={8}><path d="M1.500 6.500h6" stroke="#5f7189" strokeWidth="2" /></S></WindowButton>
          <WindowButton><S w={9} h={9}><path d="M3 3v-2h5v4h-2M1 4h5v4h-5z" stroke="#5f7189" strokeWidth="1.400" /></S></WindowButton>
          <WindowButton><S w={9} h={8}><path d="M1.500 1l6 6M7.500 1l-6 6" stroke="#5f7189" strokeWidth="2" /></S></WindowButton>
        </WindowButtons>
      </MenuBar>
      <ToolBars>
        <ToolSection $w={252}>
          <Grip /><Tools names={['blank', 'open', 'save', 'print', 'dbDown', 'dbUp']} />
          <Grip $ml={1} /><Tools names={['grid1', 'grid2', 'grid3']} />
        </ToolSection>
        <ToolSection $w={87} $ml={22}><Grip /><Tools names={['cube1', 'cube2', 'cube3']} /></ToolSection>
        <ToolSection $w={558}>
          <Grip $ml={1} /><Tool $w={16}>{T.arrow}</Tool>
          <Smudge $w={18} $ml={18} $c="#a9a9d4" /><Smudge $w={18} $ml={56} $c="#e07070" /><Smudge $w={14} $ml={9} $c="#7a7cc2" />
          <Smudge $w={13} $ml={23} $c="#938a58" /><Smudge $w={13} $ml={12} $c="#938a58" /><Smudge $w={28} $ml={16} $c="#999" />
          <Smudge $w={9} $ml={10} $c="#888" /><Smudge $w={70} $ml={6} $c="#fff" /><Smudge $w={9} $ml={4} $c="#777" /><Smudge $w={9} $ml={10} $c="#888" />
          <Smudge $w={18} $ml={34} $c="#eaa6a6" /><Smudge $w={14} $ml={12} $c="#e07070" /><Smudge $w={16} $ml={14} $c="#e6b050" /><Smudge $w={12} $ml={18} $c="#d9a840" />
          <Tool $w={24}>{T.manager}</Tool>
        </ToolSection>
        <ToolSection $w={35}><Grip /><Tool>{T.info}</Tool></ToolSection>
        <ToolSection $w={195} $from="#f9f9f9" $to="#f4f4f4">
          <Grip /><Tool>{T.palette}</Tool>
          <Combo $w={120}><ComboText $ls={-0.35}>Property defaults</ComboText><ComboButton><Down $s={3.5} /></ComboButton></Combo>
          <Tool $w={28}>{T.cube4}</Tool><Down />
        </ToolSection>
        <ToolSection $w={217} $from="#f6f6f6" $to="#f0f0f0"><Grip /><Tools names={['venn1', 'venn2', 'ball', 'replace', 'undo', 'redo', 'parts', 'manager']} /></ToolSection>
      </ToolBars>
    </>
  );
}

function TreePanel() {
  return (
    <Side>
      <Tabs><Tab $on $w={53}>Model</Tab><Tab $w={53}>Results</Tab><Tab $w={98}>Material Library</Tab></Tabs>
      <SidePanel>
        <DbRow>
          <Combo $w={213} $h={23}>
            <S w={16} h={16}><path d="M1 3c2-2.500 11-2.500 14 0v9c-2 4-12 4-14 0z" fill="#f0d05a" stroke="#222" /><path d="M1 4.500c3 2.500 11 2.500 14 0M1 8c3 3 11 3 14 0M1 11.500c3 3 11 3 14 0" stroke="#222" strokeWidth="1.300" /></S>
            <ComboText>Model Database</ComboText><ComboButton><Down $s={3.5} /></ComboButton>
          </Combo>
          <DbTools>
            <Sorter><Up $s={5} $c="#a3a3a3" /><Down $s={5} $c="#a3a3a3" /></Sorter>
            <S w={16} h={14}><path d="M1 12.500v-10l1-1.500h4l1 2h8v9.500zM7 10h4M8 10v-4.500M6 7.500l2-2 2 2" stroke="#a3a3a3" strokeWidth="1.200" /></S>
            <S w={15} h={15}><path d="M1 1h4v4h-4zM5 5l4 4M6 3c4 0 2 5 5 6M9.500 9.500h4v4h-4zM3 6v4h3" stroke="#a3a3a3" strokeWidth="1.200" /></S>
            <S w={16} h={17}><path d="M8 0v2M2 2l2 2M14 2l-2 2M0 8h2M14 8h2M3 12l1-1M13 12l-1-1" stroke="#111" strokeWidth="1.200" /><circle cx="8" cy="7.500" r="4" fill="#f8ea6a" stroke="#8a7a1a" /><path d="M6.500 11.500h3v4h-3z" fill="#555" stroke="#222" /></S>
          </DbTools>
        </DbRow>
        <TreeBox>
          <TreeRows>
            <TreeRow $pad={2}><Sign /><TreeIcon><S w={22} h={16} vb="-5 0 22 16"><Assembly /></S></TreeIcon><TreeText $ml={7} $ls={-0.2}>Models (1)</TreeText></TreeRow>
            <TreeRow $pad={19}><Sign /><TreeText $ml={5} $under>AnáliseViga</TreeText></TreeRow>
            <TreeKids>
              {kids.map(([ic, t, exp, sel]) => (
                <TreeRow key={t} $pad={36}>
                  {exp ? <><Sign plus /><StubGap /></> : <Stub />}
                  <TreeIcon>{K[ic]}</TreeIcon><TreeText $sel={sel} $ls={wider[t]}>{t}</TreeText>
                </TreeRow>
              ))}
            </TreeKids>
          </TreeRows>
          <ScrollBar>
            <ScrollEnd $h={18}><Up $s={3.5} $c="#444" /></ScrollEnd>
            <Thumb $h={352}><ThumbLines /></Thumb>
            <ScrollEnd $h={17}><Down $s={3.5} $c="#444" /></ScrollEnd>
          </ScrollBar>
        </TreeBox>
      </SidePanel>
    </Side>
  );
}

function Workspace() {
  return (
    <Work>
      <ModuleBar>Module:</ModuleBar>
      <WorkRow>
        <ToolBox>
          {boxRows.map((r, i) => (typeof r === 'string'
            ? <ToolBoxRule key={i} $m={r === 'rule' ? '2px 0 4px 0' : '1px 0 5px 0'} />
            : <ToolBoxRow key={i} $mt={r[2]}><ToolBoxCell>{Bx[r[0]]}</ToolBoxCell><ToolBoxCell>{r[1] && Bx[r[1]]}</ToolBoxCell></ToolBoxRow>))}
        </ToolBox>
        <View>
          <Canvas>
            <Beam />
            <Triad width="70" height="100" viewBox="1272 87 70 100" fill="none">
              <path d="M1290 112c12 0 27 8 27 27h-27z" fill="#145c6b" />
              <path d="M1290 111.500h3c12 1 24 12 24.500 22v4l-1.500 1.300h-26M1290 106v54M1276 162h35" stroke="#dcc8ff" strokeWidth="2" />
              <circle cx="1290" cy="104.500" r="2.800" fill="#dcc8ff" /><rect x="1287" y="158" width="7" height="7" fill="#d80a0a" />
              <path d="M1288 94l2 2 2-2M1290 96v3M1322.500 136.500l3.500 4.500M1326 136.500l-3.500 4.500M1287.500 137h3.500l-3 4h3" stroke="#ffee00" />
            </Triad>
          </Canvas>
          <BrandBar>
            <svg width="103" height="25" viewBox="0 0 106 27" preserveAspectRatio="none" fill="none" stroke="#47586a">
              <path d="M9 3c5-2 9-1 8 1s-4 3-7 4c5-1 6 1 4 4s-7 7-12 10l5-9M22 9c-5 0-5 2-3 4s2 6-5 6" strokeWidth="1.700" />
              <path d="M37 11h-6c-3 0-3 4 0 4h3c3 0 3 4 0 4h-7M40 20l2-10M45 20l3-9 4 6 5-6 1 9M64 10.500l-1.500 6c0 2 1 2.500 3 2.500h3c2 0 3-1 3.500-3l1-5.500M80 10.500l-2 8.500h8M89 20l2-10M94 20l2-6.500c1-2 2-2.500 4-2.500h5l-2 9M95 15.500h8" strokeWidth="2" />
            </svg>
          </BrandBar>
        </View>
      </WorkRow>
    </Work>
  );
}

function MessageArea() {
  return (
    <Messages>
      <MsgTabs>
        <MsgTab $on $h={38}><S w={22} h={24}><rect x="3.500" y="2.500" width="17" height="18" fill="#dcdcc8" stroke="#222" /><path d="M20 20h-12l12-9z" fill="#aaa99c" /><path d="M1 22l2-5 6-4 2 3-6 5z" fill="#d99c26" stroke="#3a2606" /></S></MsgTab>
        <MsgTab $h={35}><S w={24} h={24}><rect x=".7" y=".7" width="22.600" height="22.600" fill="#edd77a" stroke="#111" strokeWidth="1.400" /><path d="M4 8l4 4-4 4M10 8l4 4-4 4M16 8l4 4-4 4" stroke="#111" strokeWidth="1.500" /></S></MsgTab>
      </MsgTabs>
      <MsgBox>
        <MsgText>{log}</MsgText>
        <ScrollBar $w={16}>
          <ScrollEnd $h={18}><Up $s={3.5} $c="#333" /></ScrollEnd>
          <Thumb $h={11} $mt={35}><ThumbLines /></Thumb>
          <ScrollEnd $h={16}><Down $s={3.5} $c="#333" /></ScrollEnd>
        </ScrollBar>
      </MsgBox>
      <Corner><S w={14} h={14}><path d="M9 2h2M5 7h2M9 7h2M1 12h2M5 12h2M9 12h2" stroke="#aaa" strokeWidth="2" /></S></Corner>
    </Messages>
  );
}

function EditMaterial() {
  return (
    <Dialog>
      <TitleBar>
        <S w={15} h={17}><path d="M4.500 1.500h6v14h-6z" fill="#7a7cba" /><path d="M0 8.500l3.500-4.500h8l3.500 4.500-3.500 4.500h-8z" fill="#7073b0" /><path d="M0 8.500h15" stroke="#4a4c90" strokeWidth="1.200" /><path d="M3 4h9M3 13h9" stroke="#c6c8e6" /></S>
        <TitleText>Edit Material</TitleText>
        <Close><S w={13} h={11}><path d="M2.500 2l8 7M10.500 2l-8 7" stroke="#5a5a66" strokeWidth="4.400" /><path d="M2.500 2l8 7M10.500 2l-8 7" stroke="#fff" strokeWidth="2.600" /></S></Close>
      </TitleBar>
      <Body>
        <Row $h={23} $pl={2}><Label $w={39}>Name:</Label><Field $w={466} $h={23}>Material-1</Field></Row>
        <Row $h={38} $mt={4} $pl={2} $a="flex-start"><Label $w={69} $ls={-0.38}>Description:</Label><Field $w={402} $h={38} />
          <Pencil><S w={20} h={20}><path d="M1 19l2-6 4 4z" fill="#f6dcae" stroke="#b98" strokeWidth=".5" /><path d="M1 19l1-3 2 2z" fill="#222" /><path d="M3 13l10-10 4 4-10 10z" fill="#f2a63a" stroke="#b9742a" strokeWidth=".6" /><path d="M4.500 14.500l10-10" stroke="#fbd38a" strokeWidth="1.500" /><path d="M13 3l2-2 4 4-2 2z" fill="#e98f6a" stroke="#a65" strokeWidth=".5" /></S></Pencil>
        </Row>
        <Group $w={507} $h={156} $mt={6} $pad="5px 0 0 5px">
          <Legend $x={2} $ls={-0.38}>Material Behaviors</Legend>
          <List><ListItem>Elastic</ListItem><ListItem $sel>Plastic</ListItem></List>
          <Row $h={26} $mt={4}>
            <BehaviorMenu>
              {[['General', 56], ['Mechanical', 77], ['Thermal', 60], ['Electrical/Magnetic', 118], ['Other', 40]].map(([t, w]) => <MenuItem key={t} $w={w}><Mnemonic t={t} /></MenuItem>)}
            </BehaviorMenu>
            <Button $w={22} $h={22} $ml={5}><S s={15}><EraserShape /></S></Button>
          </Row>
        </Group>
        <Group $w={507} $h={372} $mt={7} $pad="9px 0 0 11px">
          <Legend $x={-4}>Plastic</Legend>
          <Row $h={25}>
            <Label $w={63}>Hardening:</Label>
            <Combo $w={102}><ComboText>Isotropic</ComboText><ComboButton><Down $s={3.5} /></ComboButton></Combo>
            <Button $w={81} $ml={238}><Down $s={5} />Suboptions</Button>
          </Row>
          <Row $h={23} $mt={2}><Check /><Label $ls={-0.42}>Use strain-rate-dependent data</Label></Row>
          <Row $h={23}><Check /><Label $ls={-0.47}>Use temperature-dependent data</Label></Row>
          <Row $h={23} $mt={2}><Label $w={140} $ls={-0.33}>Number of field variables:</Label>
            <Spin>0<SpinButtons><SpinButton><Up $s={3} $c="#3a55b8" /></SpinButton><SpinButton><Down $s={3} $c="#888" /></SpinButton></SpinButtons></Spin>
          </Row>
          <Group $w={487} $h={233} $mt={6} $ml={-2} $pad="5px 0 0 5px">
            <Legend $x={2}>Data</Legend>
            <TableFrame>
              <Table>
                <Head /><Head>{'Yield\nStress'}</Head><Head>{'Plastic\nStrain'}</Head>
                {data.map(([a, b], i) => (
                  <React.Fragment key={i}><RowHead>{i + 1}</RowHead><Cell $active={i === 6}>{a}</Cell><Cell>{b}</Cell></React.Fragment>
                ))}
              </Table>
            </TableFrame>
          </Group>
        </Group>
        <Row $h={21} $mt={10} $pl={98}><Button $w={54}>OK</Button><Button $w={54} $ml={202}>Cancel</Button></Row>
      </Body>
    </Dialog>
  );
}

export default function App() {
  return (
    <Desktop>
      <Global />
      <TopBars />
      <Main><TreePanel /><Workspace /></Main>
      <MessageArea />
      <TaskStrip />
      <EditMaterial />
    </Desktop>
  );
}
